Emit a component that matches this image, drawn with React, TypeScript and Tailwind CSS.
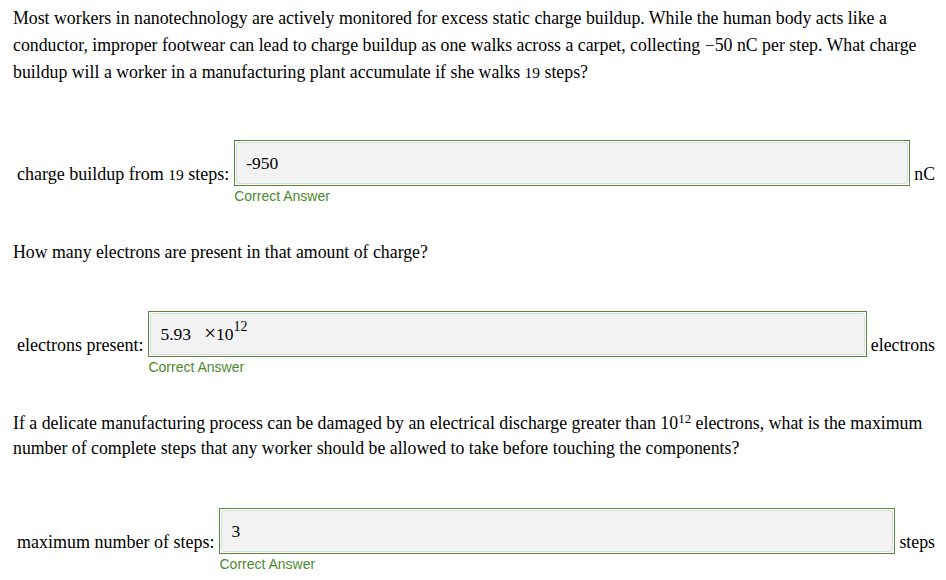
const serif = { fontFamily: '"Liberation Serif", "Times New Roman", serif' };

function AnswerRow({
  label,
  value,
  unit,
}: {
  label: React.ReactNode;
  value: React.ReactNode;
  unit: string;
}) {
  return (
    <div className="pl-[17px] pr-[11px] flex items-start">
      <span className="mt-[22px] text-[18px] leading-[24px] whitespace-nowrap pr-[5px]">{label}</span>
      <div className="flex-1 flex flex-col">
        <div className="h-[46px] border border-[#568a3a] bg-white p-px">
          <div className="h-full rounded-[3px] border border-[#dadada] bg-[#f2f2f2] flex items-center px-[9px] text-[17.5px]">
            {value}
          </div>
        </div>
        <span
          className="text-[14px] leading-[18px] mt-[1px] text-[#4b8a2e]"
          style={{ fontFamily: '"Liberation Sans", Arial, sans-serif' }}
        >
          Correct Answer
        </span>
      </div>
      <span className="mt-[22px] text-[17.8px] leading-[24px] whitespace-nowrap pl-[4px]">{unit}</span>
    </div>
  );
}

export default function App() {
  return (
    <div className="min-h-[580px] w-[946px] bg-white text-black pt-[5px]" style={serif}>
      <p className="pl-[13px] pr-[8px] text-[17.8px] leading-[27px]">
        Most workers in nanotechnology are actively monitored for excess static charge buildup. While the human body acts like a
        conductor, improper footwear can lead to charge buildup as one walks across a carpet, collecting −50 nC per step. What charge
        buildup will a worker in a manufacturing plant accumulate if she walks <span className="text-[15.5px]">19</span> steps?
      </p>

      <div className="mt-[54px]">
        <AnswerRow
          label={
            <>
              charge buildup from <span className="text-[15.5px]">19</span> steps:
            </>
          }
          value="-950"
          unit="nC"
        />
      </div>

      <p className="pl-[13px] mt-[35px] text-[17.8px] leading-[24px]">
        How many electrons are present in that amount of charge?
      </p>

      <div className="mt-[47px]">
        <AnswerRow
          label="electrons present:"
          value={
            <span>
              5.93&nbsp;&nbsp; <span className="text-[21px] leading-none">×</span>10
              <sup className="text-[14px] -top-[0.65em]">12</sup>
            </span>
          }
          unit="electrons"
        />
      </div>

      <p className="pl-[13px] pr-[8px] mt-[35px] text-[17.8px] leading-[25px]">
        If a delicate manufacturing process can be damaged by an electrical discharge greater than 10
        <sup className="text-[13px]">12</sup> electrons, what is the maximum number of complete steps that any worker should be
        allowed to take before touching the components?
      </p>

      <div className="mt-[47px]">
        <AnswerRow label="maximum number of steps:" value="3" unit="steps" />
      </div>
    </div>
  );
}
